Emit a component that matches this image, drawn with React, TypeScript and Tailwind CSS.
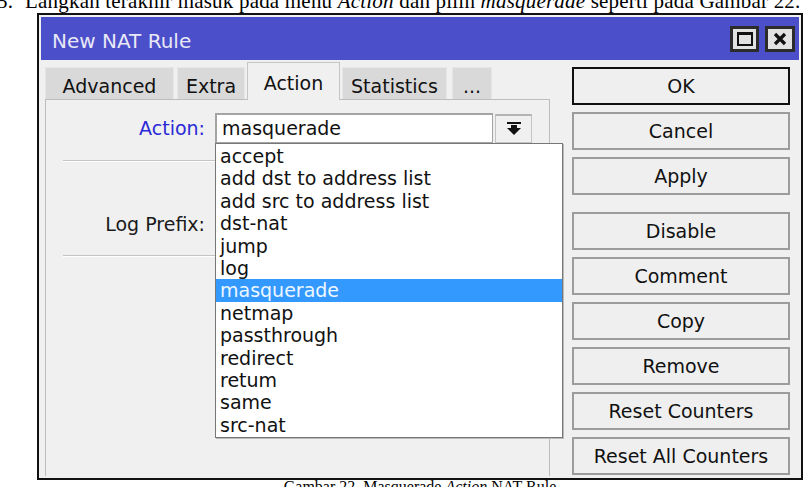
import React from 'react';

const actions = [
  'accept',
  'add dst to address list',
  'add src to address list',
  'dst-nat',
  'jump',
  'log',
  'masquerade',
  'netmap',
  'passthrough',
  'redirect',
  'retum',
  'same',
  'src-nat',
];

const sideButtons = [
  { label: 'OK', primary: true },
  { label: 'Cancel' },
  { label: 'Apply' },
  { label: 'Disable', gapBefore: true },
  { label: 'Comment' },
  { label: 'Copy' },
  { label: 'Remove' },
  { label: 'Reset Counters' },
  { label: 'Reset All Counters' },
];

const tabs = [
  { label: 'Advanced', w: 'w-[129px]', ml: 'ml-0' },
  { label: 'Extra', w: 'w-[68px]', ml: 'ml-[3px]' },
  { label: 'Action', w: 'w-[93px]', ml: 'ml-[2px]', active: true },
  { label: 'Statistics', w: 'w-[105px]', ml: 'ml-[2px]' },
  { label: '...', w: 'w-[40px]', ml: 'ml-[5px]' },
];

const DropArrow = () => (
  <svg width="16" height="13" viewBox="0 0 16 13">
    <rect x="1" y="0" width="14" height="2" fill="#111" />
    <rect x="5" y="3" width="6" height="3" fill="#111" />
    <polygon points="1,6 15,6 8,13" fill="#111" />
  </svg>
);

const App: React.FC = () => {
  return (
    <div className="w-[811px] h-[487px] bg-white overflow-hidden font-['DejaVu_Sans',sans-serif]">
      {/* paragraph line, cut off at the top */}
      <div className="h-[13px] overflow-hidden">
        <p className="-mt-[9px] flex whitespace-nowrap font-['Liberation_Serif',serif] text-[21px] leading-[21px] tracking-[0.2px] text-black">
          <span className="-ml-[3px] w-[28px] shrink-0">5.</span>
          <span>
            Langkah terakhir masuk pada menu <i>Action</i> dan pilih <i>masquerade</i> seperti pada Gambar 22.
          </span>
        </p>
      </div>

      {/* window */}
      <div className="ml-[37px] w-[766px] h-[467px] border-2 border-[#111] bg-[#f0f0f0] p-[2px] flex flex-col">
        {/* title bar */}
        <div className="h-[43px] shrink-0 bg-[#4b4fc9] flex items-center pl-[11px] pr-[4px]">
          <span className="pt-[5px] text-[20px] text-[#e8e8f6] leading-none">New NAT Rule</span>
          <div className="ml-auto flex gap-[6px]">
            <div className="w-[29px] h-[26px] border-[3px] border-[#2c2c2c] bg-[#e2e2e2] flex items-center justify-center">
              <div className="w-[16px] h-[14px] border-2 border-t-[3px] border-[#111]" />
            </div>
            <div className="w-[30px] h-[26px] border-[3px] border-[#2c2c2c] bg-[#e2e2e2] flex items-center justify-center">
              <svg width="14" height="14" viewBox="0 0 14 14">
                <path d="M2 2 L12 12 M12 2 L2 12" stroke="#111" strokeWidth="3.2" />
              </svg>
            </div>
          </div>
        </div>

        {/* body */}
        <div className="flex flex-1">
          {/* left: tabs + panel */}
          <div className="w-[509px] pl-[4px] flex flex-col">
            <div className="h-[39px] flex items-end pt-[2px]">
              {tabs.map((t) =>
                t.active ? (
                  <div
                    key={t.label}
                    className={`${t.w} ${t.ml} h-[38px] -mb-px relative z-10 bg-[#f0f0f0] border-x border-t border-[#c6c6c6] flex justify-center pt-[6px] text-[19px] text-[#111]`}
                  >
                    {t.label}
                  </div>
                ) : (
                  <div
                    key={t.label}
                    className={`${t.w} ${t.ml} h-[32px] bg-[#d9d9d9] border-x border-t border-[#e6e6e6] flex justify-center pt-[4px] text-[19px] text-[#111]`}
                  >
                    {t.label}
                  </div>
                )
              )}
            </div>

            <div className="flex-1 border border-b-0 border-[#bdbdbd] pt-[13px] flex flex-col">
              {/* Action row */}
              <div className="flex items-center h-[30px]">
                <div className="w-[159px] text-right text-[19px] text-[#2a2ad6]">Action:</div>
                <div className="ml-[10px] relative">
                  <div className="w-[278px] h-[30px] bg-white border border-[#a4a4a4] border-t-2 border-l-2 pl-[5px] flex items-center text-[19px] text-[#111]">
                    masquerade
                  </div>
                  {/* open dropdown list */}
                  <div className="absolute left-0 top-[30px] z-20 w-[348px] h-[295px] bg-white border border-[#777] shadow-[1px_1px_0_#bbb] pt-[1px]">
                    {actions.map((a) => (
                      <div
                        key={a}
                        className={`h-[22.4px] leading-[22.4px] pl-[4px] text-[19px] whitespace-nowrap ${
                          a === 'masquerade' ? 'bg-[#3399ff] text-[#eef7ff]' : 'text-[#111]'
                        }`}
                      >
                        {a}
                      </div>
                    ))}
                  </div>
                </div>
                <div className="ml-[2px] w-[37px] h-[29px] bg-[#f0f0f0] border border-[#c4c4c4] border-t-2 border-t-[#b4b4b4] flex items-center justify-center">
                  <DropArrow />
                </div>
              </div>

              <div className="mt-[17px] mx-[17px] border-t border-[#c4c4c4] border-b border-b-white" />

              {/* Log Prefix row */}
              <div className="mt-[47px] flex items-center h-[30px]">
                <div className="w-[159px] text-right text-[19px] text-[#1a1a1a]">Log Prefix:</div>
                <div className="ml-[10px] w-[317px] h-[30px] bg-white border border-[#a4a4a4]" />
              </div>

              <div className="mt-[16px] mx-[17px] border-t border-[#c4c4c4] border-b border-b-white" />
            </div>
          </div>

          {/* right: buttons */}
          <div className="ml-[22px] w-[218px] pt-[7px] flex flex-col">
            {sideButtons.map((b, i) => (
              <div
                key={b.label}
                className={`h-[38px] flex items-center justify-center text-[19px] text-[#111] bg-[#efefef] border-2 ${
                  b.primary ? 'border-[#111]' : 'border-[#9c9c9c]'
                } ${i === 0 ? '' : b.gapBefore ? 'mt-[17px]' : 'mt-[7px]'}`}
              >
                {b.label}
              </div>
            ))}
          </div>
        </div>
      </div>

      {/* caption, cut off at the bottom */}
      <div className="ml-[37px] w-[766px] text-center -mt-[3px] font-['Liberation_Serif',serif] text-[16px] leading-[20px] text-black whitespace-nowrap">
        Gambar 22. Masquerade <i>Action</i> NAT Rule
      </div>
    </div>
  );
};

export default App;
